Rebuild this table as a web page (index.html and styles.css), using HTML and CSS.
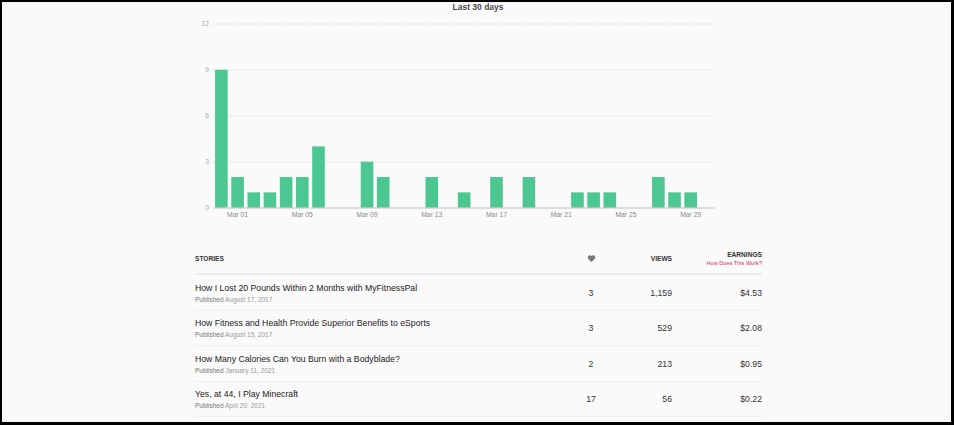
FILE: index.html
```html
<!DOCTYPE html>
<html>
<head>
<meta charset="utf-8">
<link rel="stylesheet" href="styles.css">
</head>
<body>
<div class="frame">
  <div class="content">
    <svg class="chart" width="567" height="241" viewBox="0 0 567 241">
      <text class="title" x="283" y="8" text-anchor="middle">Last 30 days</text>
      <g class="grid">
        <line x1="18.3" x2="520" y1="22" y2="22"/>
        <line x1="18.3" x2="520" y1="68" y2="68"/>
        <line x1="18.3" x2="520" y1="114" y2="114"/>
        <line x1="18.3" x2="520" y1="160" y2="160"/>
      </g>
      <g class="ylab">
        <text x="14" y="24.4">12</text>
        <text x="14" y="70.4">9</text>
        <text x="14" y="116.4">6</text>
        <text x="14" y="162.4">3</text>
        <text x="14" y="208.4">0</text>
      </g>
      <g class="bars" id="bars"></g>
      <line class="base" x1="18.3" x2="520" y1="206" y2="206"/>
      <g class="xlab" id="xlab"></g>
    </svg>

    <div class="table">
      <div class="thead">
        <div class="th th-stories">STORIES</div>
        <div class="th th-likes">
          <svg class="heart" width="9" height="9" viewBox="0 0 24 24"><path d="M12 21.35l-1.45-1.32C5.4 15.36 2 12.28 2 8.5 2 5.42 4.42 3 7.5 3c1.74 0 3.41.81 4.5 2.09C13.09 3.81 14.76 3 16.5 3 19.58 3 22 5.42 22 8.5c0 3.780-3.4 6.86-8.55 11.54L12 21.35z"/></svg>
        </div>
        <div class="th th-views">VIEWS</div>
        <div class="th th-earn">
          <div>EARNINGS</div>
          <a class="how" href="#">How Does This Work?</a>
        </div>
      </div>

      <div class="tr">
        <div class="story">
          <div class="stitle">How I Lost 20 Pounds Within 2 Months with MyFitnessPal</div>
          <div class="pub"><span class="pl">Published</span> August 17, 2017</div>
        </div>
        <div class="likes">3</div>
        <div class="views">1,159</div>
        <div class="earn">$4.53</div>
      </div>

      <div class="tr">
        <div class="story">
          <div class="stitle">How Fitness and Health Provide Superior Benefits to eSports</div>
          <div class="pub"><span class="pl">Published</span> August 15, 2017</div>
        </div>
        <div class="likes">3</div>
        <div class="views">529</div>
        <div class="earn">$2.08</div>
      </div>

      <div class="tr">
        <div class="story">
          <div class="stitle">How Many Calories Can You Burn with a Bodyblade?</div>
          <div class="pub"><span class="pl">Published</span> January 11, 2021</div>
        </div>
        <div class="likes">2</div>
        <div class="views">213</div>
        <div class="earn">$0.95</div>
      </div>

      <div class="tr">
        <div class="story">
          <div class="stitle">Yes, at 44, I Play Minecraft</div>
          <div class="pub"><span class="pl">Published</span> April 20, 2021</div>
        </div>
        <div class="likes">17</div>
        <div class="views">56</div>
        <div class="earn">$0.22</div>
      </div>
    </div>
  </div>
</div>
<script src="chart.js"></script>
</body>
</html>
```

FILE: chart.js
```js
(function () {
  var vals = [9,2,1,1,2,2,4,0,0,3,2,0,0,2,0,1,0,2,0,2,0,0,1,1,1,0,0,2,1,1,0];
  var x0 = 18.3, x1 = 520, base = 205.7, unit = 15.33;
  var slot = (x1 - x0) / vals.length, bw = 12.6;
  var NS = "http://www.w3.org/2000/svg";
  var bars = document.getElementById("bars");
  var xl = document.getElementById("xlab");
  vals.forEach(function (v, i) {
    var cx = x0 + slot * (i + 0.5);
    if (v > 0) {
      var r = document.createElementNS(NS, "rect");
      r.setAttribute("x", (cx - bw / 2).toFixed(2));
      r.setAttribute("y", (base - v * unit).toFixed(2));
      r.setAttribute("width", bw);
      r.setAttribute("height", (v * unit).toFixed(2));
      bars.appendChild(r);
    }
    // i=0 is Feb 28, i=1 is Mar 01
    if (i >= 1 && (i - 1) % 4 === 0) {
      var t = document.createElementNS(NS, "text");
      t.setAttribute("x", cx.toFixed(2));
      t.setAttribute("y", "215");
      t.setAttribute("text-anchor", "middle");
      t.textContent = "Mar " + (i < 10 ? "0" + i : i);
      xl.appendChild(t);
    }
  });
})();
```

FILE: styles.css
```css
html, body {
  margin: 0;
  padding: 0;
  background: #000;
}
body {
  font-family: "Liberation Sans", Arial, sans-serif;
  width: 954px;
  height: 425px;
  overflow: hidden;
}
.frame {
  margin: 2px 3px 0 2px;
  height: 420px;
  background: #fafafa;
  overflow: hidden;
}
.content {
  width: 567px;
  margin-left: 193px;
}
.chart {
  display: block;
}
.title {
  font-size: 8.5px;
  font-weight: bold;
  fill: #4a4a4a;
}
.grid line {
  stroke: #c8c8c8;
  stroke-width: 1;
  stroke-dasharray: 1 2;
}
.base {
  stroke: #c0c0c0;
  stroke-width: 1;
}
.ylab text {
  font-size: 6.8px;
  fill: #a8a8a8;
  text-anchor: end;
}
.xlab text {
  font-size: 6.8px;
  fill: #8a8a8a;
}
.bars rect {
  fill: #4cc792;
}
.thead {
  display: grid;
  grid-template-columns: 373px 46px 58px 90px;
  align-items: center;
  height: 29.3px;
  padding-top: 1px;
  border-bottom: 2px solid #ececec;
}
.th {
  font-size: 6.6px;
  font-weight: bold;
  color: #333;
}
.th-likes {
  display: flex;
  justify-content: center;
}
.heart {
  display: block;
  fill: #777;
}
.th-views {
  text-align: right;
}
.th-earn {
  text-align: right;
  line-height: 9px;
}
.how {
  display: block;
  font-size: 5.6px;
  font-weight: normal;
  color: #e3264f;
  text-decoration: none;
  line-height: 8px;
}
.tr {
  display: grid;
  grid-template-columns: 373px 46px 58px 90px;
  align-items: center;
  padding: 6.4px 0 6.1px;
  border-bottom: 1px solid #efefef;
}
.stitle {
  font-size: 8.7px;
  line-height: 12px;
  color: #222;
  white-space: nowrap;
}
.pub {
  margin-top: 1px;
  font-size: 6.5px;
  line-height: 9px;
  color: #999;
}
.pl {
  color: #777;
}
.likes, .views, .earn {
  font-size: 8.7px;
  color: #333;
}
.likes {
  text-align: center;
}
.views, .earn {
  text-align: right;
}
```
